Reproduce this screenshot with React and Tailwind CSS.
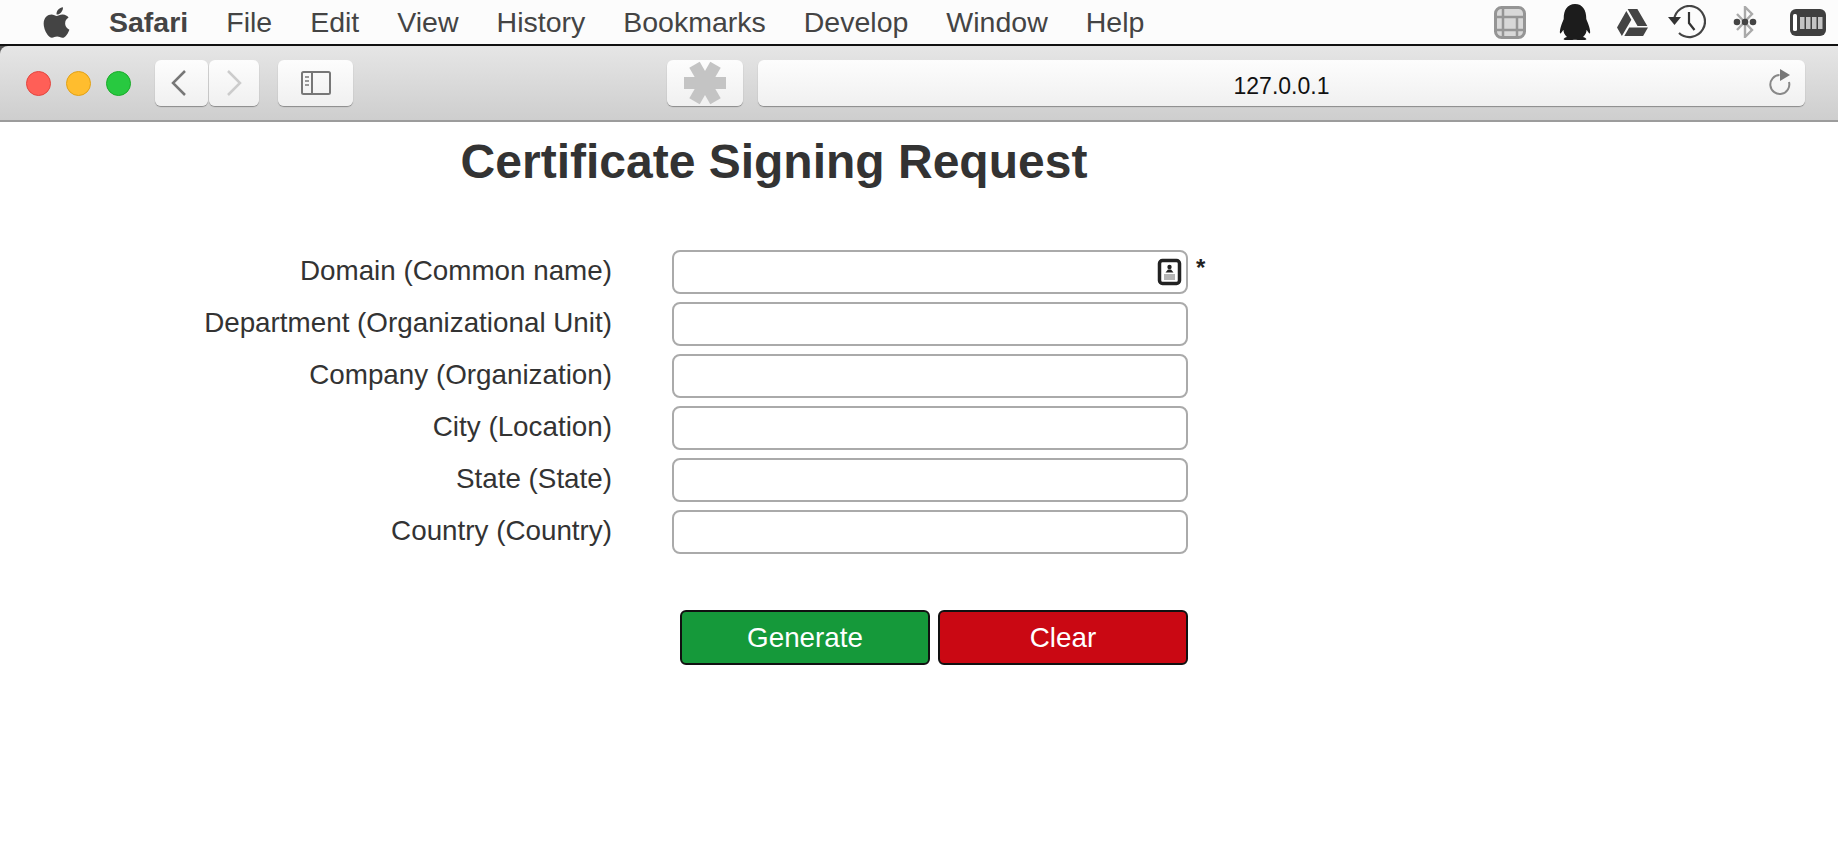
import { FaApple, FaQq, FaGoogleDrive } from "react-icons/fa";

const menus = ["File", "Edit", "View", "History", "Bookmarks", "Develop", "Window", "Help"];
const fields = [
  "Domain (Common name)",
  "Department (Organizational Unit)",
  "Company (Organization)",
  "City (Location)",
  "State (State)",
  "Country (Country)",
];

const GridIcon = () => (
  <svg width="32" height="33" viewBox="0 0 32 33">
    <rect x="1.5" y="1.5" width="29" height="30" rx="6" fill="#d8d8d8" stroke="#959595" strokeWidth="3" />
    <path d="M9 2v29M23 11v20M2 11h28M2 24h28" stroke="#959595" strokeWidth="2.5" fill="none" />
  </svg>
);

const TimeIcon = () => (
  <svg width="38" height="34" viewBox="0 0 38 34" fill="none">
    <path d="M6 15A15.5 15.5 0 1 1 11 28" stroke="#444" strokeWidth="2.2" />
    <path d="M0 12h13l-6.5 8z" fill="#333" />
    <path d="M21 7v11l5.5 7" stroke="#333" strokeWidth="2.2" />
  </svg>
);

const BluetoothIcon = () => (
  <svg width="24" height="32" viewBox="0 0 24 32" fill="none">
    <path d="M4 8l15 16-7 7V1l7 7L4 24" stroke="#aaa" strokeWidth="2.4" />
    <circle cx="4" cy="16" r="3.3" fill="#444" />
    <circle cx="12" cy="16" r="3.3" fill="#444" />
    <circle cx="20" cy="16" r="3.3" fill="#444" />
  </svg>
);

const BatteryIcon = () => (
  <svg width="36" height="27" viewBox="0 0 36 27">
    <rect x="0" y="0" width="36" height="27" rx="6" fill="#3f3f3f" />
    <rect x="3" y="5" width="4" height="17" rx="1.5" fill="#fff" />
    <rect x="10" y="8" width="4.5" height="12" fill="#c4c4c4" />
    <rect x="16" y="8" width="4.5" height="12" fill="#c4c4c4" />
    <rect x="22" y="8" width="4.5" height="12" fill="#c4c4c4" />
    <rect x="28" y="8" width="4.5" height="12" fill="#c4c4c4" />
  </svg>
);

const ToolButton = ({ className, children }) => (
  <div className={"h-[46px] rounded-[6px] bg-gradient-to-b from-[#fdfdfd] to-[#f0f0f0] shadow-[0_1px_1px_rgba(0,0,0,0.35)] flex items-center justify-center " + className}>
    {children}
  </div>
);

const App = () => {
  return (
    <div className="w-[1838px] h-[846px] overflow-hidden bg-white text-[#333] font-['Liberation_Sans',sans-serif]">
      {/* menu bar */}
      <div className="h-[44px] bg-[#fcfcfc] flex items-center text-[#444] text-[28.5px]">
        <FaApple className="ml-[39px] mr-[35px] text-[35px] text-[#444]" />
        <span className="font-bold mr-[38px]">Safari</span>
        <div className="flex gap-[38px]">
          {menus.map((m) => (
            <span key={m}>{m}</span>
          ))}
        </div>
        <div className="ml-auto mr-[12px] flex items-center">
          <GridIcon />
          <FaQq className="ml-[31px] text-[36px] text-[#1c1c1c]" />
          <FaGoogleDrive className="ml-[24px] text-[31px] text-[#444]" />
          <div className="ml-[20px]"><TimeIcon /></div>
          <div className="ml-[27px]"><BluetoothIcon /></div>
          <div className="ml-[33px]"><BatteryIcon /></div>
        </div>
      </div>

      {/* browser toolbar */}
      <div className="border-t-2 border-[#111] bg-[#555]">
        <div className="h-[76px] rounded-tl-[8px] border-b-2 border-[#9c9c9c] bg-gradient-to-b from-[#e6e6e6] to-[#cecece] flex items-center">
          <div className="ml-[26px] w-[25px] h-[25px] rounded-full bg-[#ff5f57] border border-[#e2463f]" />
          <div className="ml-[15px] w-[25px] h-[25px] rounded-full bg-[#ffbd2e] border border-[#e1a116]" />
          <div className="ml-[15px] w-[25px] h-[25px] rounded-full bg-[#28c940] border border-[#1aab29]" />
          <ToolButton className="ml-[24px] w-[53px]">
            <svg className="mr-[5px]" width="18" height="28" viewBox="0 0 18 28" fill="none"><path d="M15 2L3 14l12 12" stroke="#777" strokeWidth="2.5" /></svg>
          </ToolButton>
          <ToolButton className="ml-[1px] w-[50px]">
            <svg width="18" height="28" viewBox="0 0 18 28" fill="none"><path d="M3 2l12 12L3 26" stroke="#ccc" strokeWidth="2.5" /></svg>
          </ToolButton>
          <ToolButton className="ml-[19px] w-[75px]">
            <svg width="30" height="24" viewBox="0 0 30 24" fill="none">
              <rect x="1" y="1" width="28" height="22" rx="1.5" stroke="#777" strokeWidth="2" />
              <path d="M11 1v22" stroke="#777" strokeWidth="2" />
              <path d="M4 6h4M4 10h4M4 14h4" stroke="#999" strokeWidth="2" />
            </svg>
          </ToolButton>
          <ToolButton className="ml-[314px] w-[76px]">
            <svg width="44" height="44" viewBox="-22 -22 44 44">
              <rect x="-21" y="-6" width="42" height="12" fill="#c4c4c4" />
              <rect x="-21" y="-6" width="42" height="12" fill="#c4c4c4" transform="rotate(60)" />
              <rect x="-21" y="-6" width="42" height="12" fill="#c4c4c4" transform="rotate(120)" />
            </svg>
          </ToolButton>
          <ToolButton className="ml-[15px] w-[1047px] relative">
            <span className="text-[23px] text-[#111] pt-[6px]">127.0.0.1</span>
            <svg className="absolute right-[11px] top-[9px]" width="26" height="28" viewBox="0 0 26 28" fill="none">
              <path d="M21 13a9.5 9.5 0 1 1-9.5-7" stroke="#888" strokeWidth="2" />
              <path d="M12 0l10 6-10 6z" fill="#777" />
            </svg>
          </ToolButton>
        </div>
      </div>

      {/* page */}
      <h1 className="w-[1548px] mt-[8px] text-center text-[48px] leading-[64px] font-bold text-[#333]">
        Certificate Signing Request
      </h1>
      <div className="mt-[56px] flex flex-col gap-[8px]">
        {fields.map((label, i) => (
          <div key={label} className="flex items-center h-[44px]">
            <label className="w-[612px] mb-[2px] text-right text-[27.8px] text-[#333]">{label}</label>
            <div className="ml-[60px] relative">
              <input className="block w-[516px] h-[44px] rounded-[8px] border-2 border-[#aaa] bg-white" />
              {i === 0 && (
                <svg className="absolute right-[6px] top-[8px] blur-[0.6px]" width="25" height="28" viewBox="0 0 25 28">
                  <rect x="2.5" y="2.5" width="20" height="23" rx="3" fill="#fff" stroke="#222" strokeWidth="3.5" />
                  <circle cx="12.5" cy="9" r="2.2" fill="#222" />
                  <path d="M8.5 14.5l2.5-3h3l2.5 3z" fill="#222" />
                  <rect x="7" y="16" width="11" height="6" fill="#b5b5b5" />
                </svg>
              )}
            </div>
            {i === 0 && <span className="ml-[8px] text-[24px] font-bold text-[#222] self-start">*</span>}
          </div>
        ))}
      </div>
      <div className="ml-[680px] mt-[56px] flex gap-[8px]">
        <button className="w-[250px] h-[55px] rounded-[6px] border-2 border-[#111] bg-[#15993a] text-white text-[27.8px]">Generate</button>
        <button className="w-[250px] h-[55px] rounded-[6px] border-2 border-[#111] bg-[#ca0813] text-white text-[27.8px]">Clear</button>
      </div>
    </div>
  );
};

export default App;
